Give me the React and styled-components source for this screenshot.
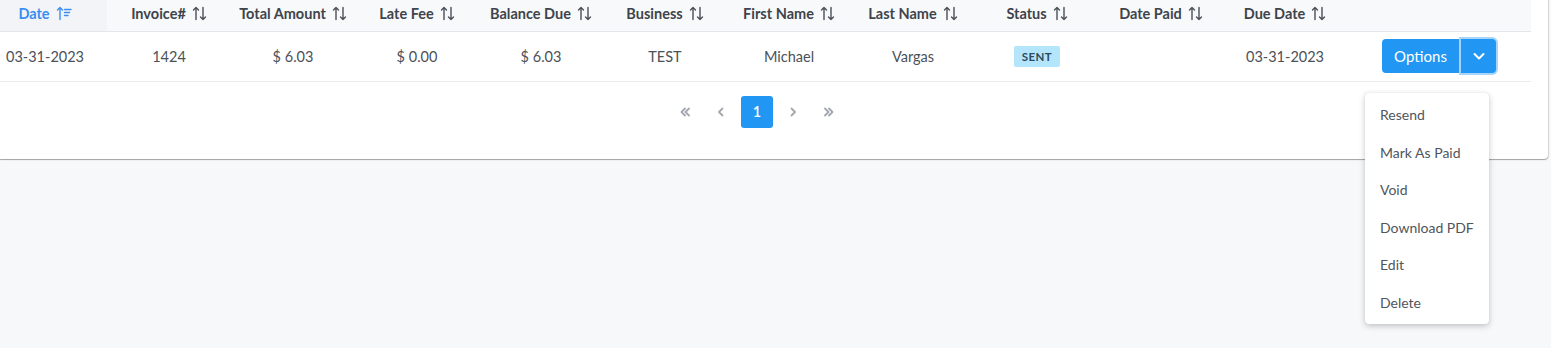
import React from "react";
import styled, { createGlobalStyle } from "styled-components";

const Global = createGlobalStyle`
  html, body { margin: 0; padding: 0; background: #f7f8fa; }
  body { font-family: Lato, "Noto Sans", sans-serif; }
`;

const Page = styled.div`
  position: relative;
  width: 1551px;
  height: 348px;
  background: #f7f8fa;
`;

const Card = styled.div`
  width: 1548px;
  box-sizing: border-box;
  padding-right: 17px;
  background: #fff;
  border-radius: 0 0 4px 0;
  box-shadow: 0 1px 1px rgba(0, 0, 0, 0.35), 1px 0 1px rgba(0, 0, 0, 0.12);
`;

const ScrollArea = styled.div`
  overflow: hidden;
`;

const ScrollContent = styled.div`
  width: 1548px;
  margin-left: -17px;
`;

const Table = styled.table`
  width: 1548px;
  border-collapse: collapse;
  table-layout: fixed;
`;

const Th = styled.th`
  height: 31px;
  padding: 0 0 3px;
  box-sizing: border-box;
  background: ${(p) => (p.$sorted ? "#f2f4f7" : "#f8f9fa")};
  border-bottom: 1px solid #e3e6ea;
  font-size: 14.5px;
  font-weight: 700;
  color: ${(p) => (p.$sorted ? "#3a8ef0" : "#3e444b")};
  text-align: center;
  white-space: nowrap;
`;

const HeadInner = styled.span`
  display: inline-flex;
  align-items: center;
  gap: 6px;
`;

const Td = styled.td`
  height: 49px;
  padding: 0;
  border-bottom: 1px solid #e9ecef;
  font-size: 14.5px;
  color: #4b5158;
  text-align: center;
  white-space: nowrap;
`;

const Badge = styled.span`
  display: inline-block;
  padding: 4px 8px;
  background: #b3e5fc;
  color: #2d4b5e;
  font-size: 11.5px;
  font-weight: 700;
  letter-spacing: 0.4px;
  border-radius: 2px;
`;

const BtnGroup = styled.div`
  display: inline-flex;
  align-items: stretch;
  gap: 2px;
  vertical-align: middle;
`;

const MainBtn = styled.button`
  height: 34px;
  width: 77px;
  border: 0;
  border-radius: 4px 0 0 4px;
  background: #2196f3;
  color: #fff;
  font-family: Lato, "Noto Sans", sans-serif;
  font-size: 15px;
  padding: 0;
`;

const ToggleBtn = styled.button`
  height: 34px;
  width: 35px;
  border: 0;
  border-radius: 0 4px 4px 0;
  background: #2196f3;
  color: #fff;
  padding: 0;
  display: flex;
  align-items: center;
  justify-content: center;
  box-shadow: 0 0 0 2px #a6d4fa;
`;

const Pager = styled.div`
  display: flex;
  justify-content: center;
  align-items: center;
  gap: 4px;
  padding: 14px 0 31px;
`;

const PageItem = styled.div`
  width: 32px;
  height: 32px;
  display: flex;
  align-items: center;
  justify-content: center;
  border-radius: 3px;
  background: ${(p) => (p.$active ? "#2196f3" : "transparent")};
  color: ${(p) => (p.$active ? "#fff" : "#a3a7ae")};
  font-size: 14.5px;
  font-weight: 600;
`;

const Menu = styled.div`
  position: absolute;
  left: 1365px;
  top: 93px;
  width: 124px;
  box-sizing: border-box;
  padding: 3px 0;
  background: #fff;
  border-radius: 4px;
  box-shadow: 0 2px 6px rgba(0, 0, 0, 0.22), 0 0 1px rgba(0, 0, 0, 0.15);
`;

const MenuItem = styled.div`
  height: 37.5px;
  display: flex;
  align-items: center;
  padding-left: 15px;
  font-size: 14px;
  color: #4f555c;
`;

const SortIcon = () => (
  <svg width="15" height="15" viewBox="0 0 15 15" fill="none" stroke="#4a5058" strokeWidth="1.4" strokeLinecap="round" strokeLinejoin="round">
    <path d="M4 13.5V1.5M1.5 4L4 1.5L6.5 4" />
    <path d="M11 1.5V13.5M8.5 11L11 13.5L13.5 11" />
  </svg>
);

const SortedIcon = () => (
  <svg width="16" height="15" viewBox="0 0 16 15" fill="none" stroke="#3a8ef0" strokeWidth="1.4" strokeLinecap="round" strokeLinejoin="round">
    <path d="M4 13.5V1.5M1.5 4L4 1.5L6.5 4" />
    <path d="M8.5 3.5H15M8.5 6.5H13.5M8.5 9.5H12" />
  </svg>
);

const Chevron = ({ d, w = 14, sw = 1.8 }) => (
  <svg width={w} height="14" viewBox="0 0 14 14" fill="none" stroke="currentColor" strokeWidth={sw} strokeLinecap="round" strokeLinejoin="round">
    <path d={d} />
  </svg>
);

const columns = [
  "Date",
  "Invoice#",
  "Total Amount",
  "Late Fee",
  "Balance Due",
  "Business",
  "First Name",
  "Last Name",
  "Status",
  "Date Paid",
  "Due Date",
];

const row = ["03-31-2023", "1424", "$ 6.03", "$ 0.00", "$ 6.03", "TEST", "Michael", "Vargas", "SENT", "", "03-31-2023"];

const menuItems = ["Resend", "Mark As Paid", "Void", "Download PDF", "Edit", "Delete"];

export default function App() {
  return (
    <Page>
      <Global />
      <Card>
        <ScrollArea>
          <ScrollContent>
            <Table>
              <colgroup>
                {columns.map((c) => (
                  <col key={c} style={{ width: 124 }} />
                ))}
                <col style={{ width: 184 }} />
              </colgroup>
              <thead>
                <tr>
                  {columns.map((c, i) => (
                    <Th key={c} $sorted={i === 0}>
                      <HeadInner>
                        {c}
                        {i === 0 ? <SortedIcon /> : <SortIcon />}
                      </HeadInner>
                    </Th>
                  ))}
                  <Th />
                </tr>
              </thead>
              <tbody>
                <tr>
                  {row.map((v, i) => (
                    <Td key={i}>{v === "SENT" ? <Badge>SENT</Badge> : v}</Td>
                  ))}
                  <Td>
                    <BtnGroup>
                      <MainBtn>Options</MainBtn>
                      <ToggleBtn>
                        <Chevron d="M2.5 5L7 9.5L11.5 5" sw={2} />
                      </ToggleBtn>
                    </BtnGroup>
                  </Td>
                </tr>
              </tbody>
            </Table>
            <Pager>
              <PageItem>
                <Chevron d="M7 3.5L3.5 7L7 10.5M11 3.5L7.5 7L11 10.5" />
              </PageItem>
              <PageItem>
                <Chevron d="M8.5 3.5L5 7L8.5 10.5" />
              </PageItem>
              <PageItem $active>1</PageItem>
              <PageItem>
                <Chevron d="M5.5 3.5L9 7L5.5 10.5" />
              </PageItem>
              <PageItem>
                <Chevron d="M3 3.5L6.5 7L3 10.5M7 3.5L10.5 7L7 10.5" />
              </PageItem>
            </Pager>
          </ScrollContent>
        </ScrollArea>
      </Card>
      <Menu>
        {menuItems.map((m) => (
          <MenuItem key={m}>{m}</MenuItem>
        ))}
      </Menu>
    </Page>
  );
}
